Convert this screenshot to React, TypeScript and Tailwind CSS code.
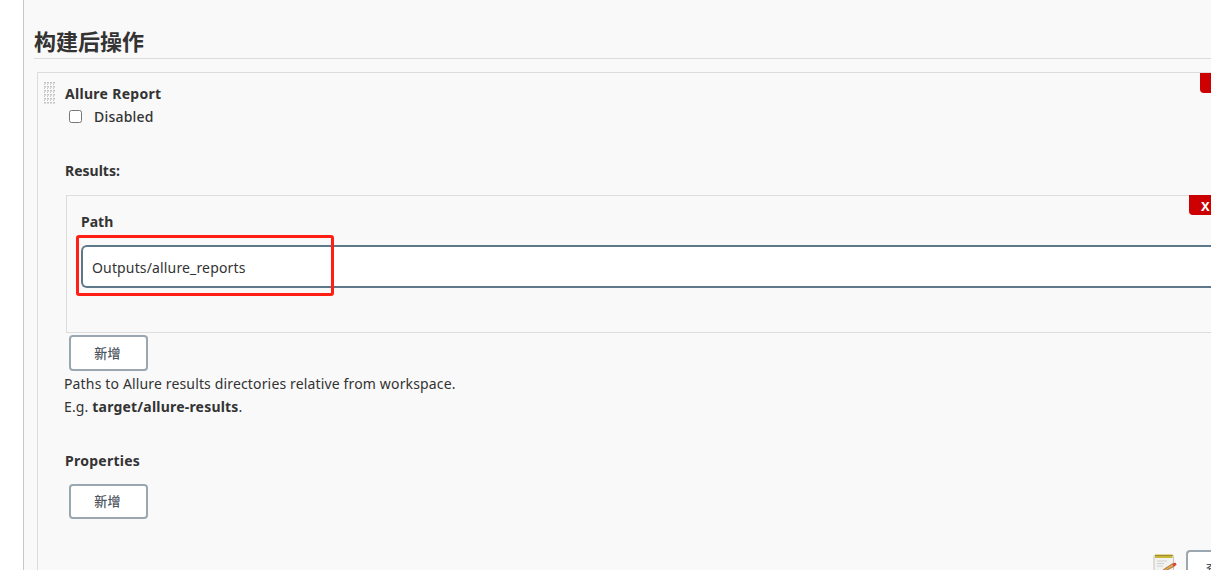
import React, { useState } from 'react'

function AddButton({ className = '' }: { className?: string }) {
  return (
    <button
      type="button"
      className={`block w-[79px] rounded-[4px] border-2 border-[#9aa7b0] bg-white pr-0.5 text-center text-[13px] font-medium text-[#4d545d] ${className}`}
    >
      新增
    </button>
  )
}

function DragHandle() {
  return (
    <svg className="block h-[22px] w-3" viewBox="0 0 12 22" shapeRendering="crispEdges">
      <defs>
        <pattern id="grip" width="3" height="4" patternUnits="userSpaceOnUse">
          <rect width="2" height="1" fill="#c4c4c0" />
          <rect y="1" width="2" height="1" fill="#dcdcda" />
          <rect y="2" width="1" height="1" fill="#c9c9c5" />
        </pattern>
      </defs>
      <rect width="12" height="22" fill="url(#grip)" />
    </svg>
  )
}

function NotepadIcon() {
  return (
    <svg className="block h-6 w-6" viewBox="0 0 24 24" fill="none">
      <rect x="1" y="1.5" width="19.5" height="21" rx="1" fill="#f2f2f0" stroke="#c3c3c0" />
      <rect x="2" y="0.5" width="17.5" height="3.5" fill="#c9b536" />
      <path d="M2.5 1.5h17" stroke="#75691c" strokeDasharray="1 1" />
      <path d="M4 7h10M4 9.5h7M4 12h6" stroke="#d0d0ce" />
      <path d="M10.5 15.5l9-5.8 1.8 2.6-9.8 5z" fill="#e7a34c" stroke="#8f5a2c" strokeWidth=".7" />
      <path d="M19.3 9.8l3-1.4 1.4 2.4-2.6 1.8z" fill="#d2423a" />
    </svg>
  )
}

export default function App() {
  const [disabled, setDisabled] = useState(false)
  const [path, setPath] = useState('Outputs/allure_reports')

  return (
    <div className="h-[570px] w-full overflow-hidden bg-white pl-[23px] font-['Noto_Sans','Noto_Sans_CJK_SC',sans-serif] text-sm leading-[23px] tracking-[0.15px] text-[#333]">
      <main className="h-full border-l border-[#c4cbc9] bg-[#f9f9f9] pt-[26px]">
        <h2 className="ml-2.5 h-[33px] border-b border-[#ddd] text-[22px] leading-[31px] font-bold tracking-normal">构建后操作</h2>

        <section className="relative mt-[13px] ml-[13px] flex h-[600px] border-t border-l border-[#ddd] pt-[9px] pl-1.5">
          <button type="button" aria-label="Delete" className="absolute top-0 right-0 h-5 w-[11px] rounded-bl-[4px] bg-[#c00]" />
          <div className="w-5 shrink-0">
            <DragHandle />
          </div>

          <div className="min-w-0 flex-1">
            <div className="pl-px font-bold tracking-[0.3px]">Allure Report</div>
            <label className="flex items-center pl-[5px]">
              <input type="checkbox" className="m-0 size-[13px]" checked={disabled} onChange={(e) => setDisabled(e.target.checked)} />
              <span className="ml-3 font-medium tracking-[0.2px]">Disabled</span>
            </label>

            <div className="mt-[31px] pl-px font-bold tracking-normal">Results:</div>

            {/* Repeatable path entry */}
            <div className="relative mt-[13px] ml-0.5 h-[138px] border-y border-l border-[#ddd] pt-3.5 pl-3.5">
              <button type="button" className="absolute -top-px right-0 h-5 w-[22px] rounded-bl-[4px] bg-[#c00] pl-3 text-left text-[13px] leading-[22px] font-bold text-white">
                X
              </button>
              <div className="font-bold tracking-normal">Path</div>
              <div className="relative mt-3">
                <input
                  className="block h-[43px] w-full rounded-l-md border-2 border-r-0 border-[#5c7889] bg-white px-[9px] pt-0.5 text-sm tracking-[0.15px] outline-none"
                  value={path}
                  onChange={(e) => setPath(e.target.value)}
                />
                <div className="pointer-events-none absolute -top-2.5 -left-[5px] h-[61px] w-[258px] rounded-[3px] border-3 border-[#ff1f14]" />
              </div>
            </div>

            <AddButton className="mt-0.5 ml-[5px] h-9" />
            <p className="mt-[1px]">Paths to Allure results directories relative from workspace.</p>
            <p>
              E.g. <b className="tracking-[0.2px]">target/allure-results</b>.
            </p>

            <div className="mt-[31px] pl-px font-bold tracking-[0.25px]">Properties</div>
            <AddButton className="mt-3 ml-[5px] h-[35px]" />

            <div className="mt-[31px] flex justify-end">
              <div className="mt-1 mr-[9px]">
                <NotepadIcon />
              </div>
              <button type="button" className="h-9 w-[25px] overflow-hidden rounded-l-[4px] border-2 border-r-0 border-[#9aa7b0] bg-white pl-[18px] text-left text-[13px] font-medium whitespace-nowrap text-[#4d545d]">
                查看
              </button>
            </div>
          </div>
        </section>
      </main>
    </div>
  )
}
